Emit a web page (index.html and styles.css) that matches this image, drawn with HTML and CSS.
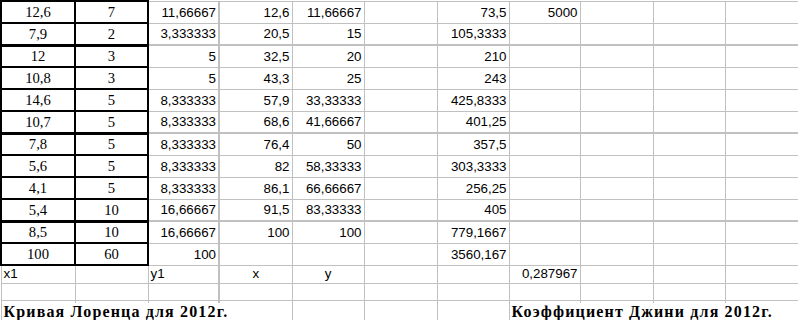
FILE: index.html
```html
<!DOCTYPE html>
<html lang="ru">
<head>
<meta charset="utf-8">
<title>Кривая Лоренца</title>
<link rel="stylesheet" href="styles.css">
</head>
<body>
<table class="sheet">
  <colgroup>
    <col class="w74"><col class="w73"><col class="w71"><col class="w73"><col class="w72"><col class="w73"><col class="w72"><col class="w71"><col class="w73"><col class="w72"><col class="w73">
  </colgroup>
  <tbody>
    <tr class="r"><td class="s">12,6</td><td class="s">7</td><td>11,66667</td><td class="d">12,6</td><td>11,66667</td><td></td><td>73,5</td><td>5000</td><td></td><td></td><td></td></tr>
    <tr class="r"><td class="s">7,9</td><td class="s">2</td><td>3,333333</td><td class="d">20,5</td><td>15</td><td></td><td>105,3333</td><td></td><td></td><td></td><td></td></tr>
    <tr class="r brk"><td class="s">12</td><td class="s">3</td><td>5</td><td class="d">32,5</td><td>20</td><td></td><td>210</td><td></td><td></td><td></td><td></td></tr>
    <tr class="r"><td class="s">10,8</td><td class="s">3</td><td>5</td><td class="d">43,3</td><td>25</td><td></td><td>243</td><td></td><td></td><td></td><td></td></tr>
    <tr class="r"><td class="s">14,6</td><td class="s">5</td><td>8,333333</td><td class="d">57,9</td><td>33,33333</td><td></td><td>425,8333</td><td></td><td></td><td></td><td></td></tr>
    <tr class="r"><td class="s">10,7</td><td class="s">5</td><td>8,333333</td><td class="d">68,6</td><td>41,66667</td><td></td><td>401,25</td><td></td><td></td><td></td><td></td></tr>
    <tr class="r brk"><td class="s">7,8</td><td class="s">5</td><td>8,333333</td><td class="d">76,4</td><td>50</td><td></td><td>357,5</td><td></td><td></td><td></td><td></td></tr>
    <tr class="r"><td class="s">5,6</td><td class="s">5</td><td>8,333333</td><td class="d">82</td><td>58,33333</td><td></td><td>303,3333</td><td></td><td></td><td></td><td></td></tr>
    <tr class="r"><td class="s">4,1</td><td class="s">5</td><td>8,333333</td><td class="d">86,1</td><td>66,66667</td><td></td><td>256,25</td><td></td><td></td><td></td><td></td></tr>
    <tr class="r"><td class="s">5,4</td><td class="s">10</td><td>16,66667</td><td class="d">91,5</td><td>83,33333</td><td></td><td>405</td><td></td><td></td><td></td><td></td></tr>
    <tr class="r brk"><td class="s">8,5</td><td class="s">10</td><td>16,66667</td><td class="d">100</td><td>100</td><td></td><td>779,1667</td><td></td><td></td><td></td><td></td></tr>
    <tr class="r"><td class="s">100</td><td class="s">60</td><td>100</td><td class="d"></td><td></td><td></td><td>3560,167</td><td></td><td></td><td></td><td></td></tr>
    <tr class="lab"><td class="l">x1</td><td></td><td class="l">y1</td><td class="d c">x</td><td class="c">y</td><td></td><td></td><td>0,287967</td><td></td><td></td><td></td></tr>
    <tr class="empty"><td></td><td></td><td></td><td class="d"></td><td></td><td></td><td></td><td></td><td></td><td></td><td></td></tr>
    <tr class="title"><td class="t"><span class="tt">Кривая Лоренца для 2012г.</span></td><td></td><td></td><td class="d"></td><td></td><td></td><td></td><td class="t"><span class="tt">Коэффициент Джини для 2012г.</span></td><td></td><td></td><td></td></tr>
  </tbody>
</table>
</body>
</html>
```
FILE: styles.css
```css
html, body {
  margin: 0;
  padding: 0;
  background: #fff;
}

.sheet {
  border-collapse: collapse;
  table-layout: fixed;
  width: 798px;
  font-family: "Liberation Sans", Arial, sans-serif;
  font-size: 13.33px;
  color: #000;
}

.w74 { width: 74px; }
.w73 { width: 73px; }
.w72 { width: 72px; }
.w71 { width: 71px; }

.sheet td {
  border: 1px solid #c0c0c0;
  padding: 0 2px 3px 2px;
  text-align: right;
  vertical-align: bottom;
  white-space: nowrap;
  line-height: 15px;
}

.r { height: 22px; }
.lab { height: 18px; }
.empty { height: 17px; }
.title { height: 23px; }

.sheet td.d { border-left: 2px solid #c0c0c0; }

.sheet .brk td { border-top: 2px solid #c0c0c0; }

.sheet td.s {
  border: 2px solid #000;
  font-family: "Liberation Serif", "Times New Roman", serif;
  font-size: 14.67px;
  text-align: center;
  padding-bottom: 1px;
  line-height: 17px;
}

.sheet .brk td.s { border-top: 3px solid #000; }

.sheet td.l { text-align: left; padding-bottom: 2px; }
.sheet td.c { text-align: center; padding-bottom: 2px; }
.lab td { padding-bottom: 2px; }

.sheet td.t {
  text-align: left;
  overflow: visible;
  padding-bottom: 2px;
}

.tt {
  font-family: "Liberation Serif", "Times New Roman", serif;
  font-weight: bold;
  font-size: 16px;
  letter-spacing: 1.15px;
  background: #fff;
  line-height: 18px;
}
```
